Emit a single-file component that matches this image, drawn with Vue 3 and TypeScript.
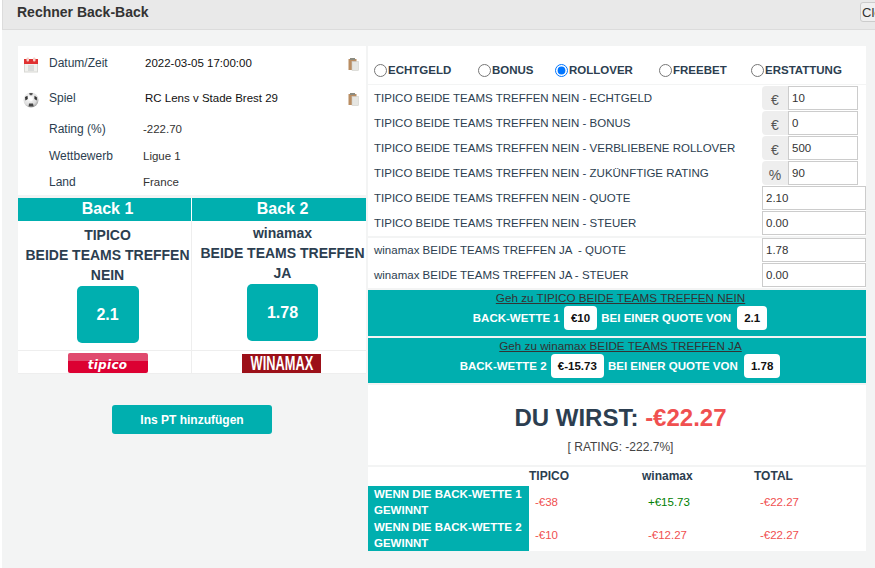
<script setup lang="ts">
interface Field {
  label: string
  value: string
  addon?: string
}

const tipicoFields: Field[] = [
  { label: 'TIPICO BEIDE TEAMS TREFFEN NEIN - ECHTGELD', value: '10', addon: '€' },
  { label: 'TIPICO BEIDE TEAMS TREFFEN NEIN - BONUS', value: '0', addon: '€' },
  { label: 'TIPICO BEIDE TEAMS TREFFEN NEIN - VERBLIEBENE ROLLOVER', value: '500', addon: '€' },
  { label: 'TIPICO BEIDE TEAMS TREFFEN NEIN - ZUKÜNFTIGE RATING', value: '90', addon: '%' },
  { label: 'TIPICO BEIDE TEAMS TREFFEN NEIN - QUOTE', value: '2.10' },
  { label: 'TIPICO BEIDE TEAMS TREFFEN NEIN - STEUER', value: '0.00' }
]

const winamaxFields: Field[] = [
  { label: 'winamax BEIDE TEAMS TREFFEN JA  - QUOTE', value: '1.78' },
  { label: 'winamax BEIDE TEAMS TREFFEN JA - STEUER', value: '0.00' }
]

const modes = [
  { name: 'ECHTGELD', width: 104 },
  { name: 'BONUS', width: 77 },
  { name: 'ROLLOVER', width: 104 },
  { name: 'FREEBET', width: 92 },
  { name: 'ERSTATTUNG', width: 100 }
]

const results = [
  { label: 'WENN DIE BACK-WETTE 1 GEWINNT', a: '-€38', b: '+€15.73', total: '-€22.27' },
  { label: 'WENN DIE BACK-WETTE 2 GEWINNT', a: '-€10', b: '-€12.27', total: '-€22.27' }
]
</script>

<template>
  <div class="page">
    <header class="topbar">
      <h1>Rechner Back-Back</h1>
      <button class="close" type="button">Close</button>
    </header>

    <main class="columns">
      <section class="left">
        <div class="info">
          <div class="info-row tall">
            <svg class="icon" viewBox="0 0 16 16" width="16" height="16">
              <rect x="1.5" y="3" width="13" height="12" fill="#f1f1ee" stroke="#d8d8d4" />
              <rect x="1" y="2" width="14" height="5" fill="#e03131" />
              <rect x="3.5" y="0.5" width="2.5" height="4" rx="1" fill="#f4d0c8" />
              <rect x="10" y="0.5" width="2.5" height="4" rx="1" fill="#f4d0c8" />
              <path d="M5 9h6M5 11h6M5 13h6" stroke="#c4c8c8" />
            </svg>
            <span class="key">Datum/Zeit</span>
            <span class="val">2022-03-05 17:00:00</span>
            <svg class="clip" viewBox="0 0 11 13" width="11" height="13">
              <rect x="0.5" y="1" width="8" height="11" fill="#b98d62" />
              <rect x="2" y="0" width="5" height="2" fill="#8b8b80" />
              <rect x="4" y="3.5" width="6.5" height="9" fill="#e6e6e2" stroke="#cfcfca" stroke-width="0.6" />
            </svg>
          </div>
          <div class="info-row tall">
            <svg class="icon ball" viewBox="0 0 16 16" width="16" height="16">
              <defs>
                <radialGradient id="ballShade" cx="0.4" cy="0.35" r="0.75">
                  <stop offset="0" stop-color="#fff" />
                  <stop offset="0.65" stop-color="#dcdcdc" />
                  <stop offset="1" stop-color="#8c8c8c" />
                </radialGradient>
              </defs>
              <circle cx="8" cy="8" r="7.5" fill="url(#ballShade)" />
              <path d="M6.6 5.2 9.4 5.2 10 8 8 9.6 6 8Z" fill="#fff" />
              <path d="M2 5 4.5 3.8 4.8 7 2.4 8.6Z" fill="#333" />
              <path d="M11.5 3.8 14 5.4 13.8 8.4 11.4 7Z" fill="#333" />
              <path d="M6.2 1 9.8 1 9.2 3.2 6.8 3.2Z" fill="#555" />
              <path d="M6 11.4 10 11.4 10.6 14.6 5.6 14.6Z" fill="#444" />
            </svg>
            <span class="key">Spiel</span>
            <span class="val">RC Lens v Stade Brest 29</span>
            <svg class="clip" viewBox="0 0 11 13" width="11" height="13">
              <rect x="0.5" y="1" width="8" height="11" fill="#b98d62" />
              <rect x="2" y="0" width="5" height="2" fill="#8b8b80" />
              <rect x="4" y="3.5" width="6.5" height="9" fill="#e6e6e2" stroke="#cfcfca" stroke-width="0.6" />
            </svg>
          </div>
          <div class="info-row plain">
            <span class="key">Rating (%)</span>
            <span class="val muted">-222.70</span>
          </div>
          <div class="info-row plain">
            <span class="key">Wettbewerb</span>
            <span class="val muted">Ligue 1</span>
          </div>
          <div class="info-row plain">
            <span class="key">Land</span>
            <span class="val muted">France</span>
          </div>
        </div>

        <div class="backs">
          <div class="back-head">Back 1</div>
          <div class="back-head second">Back 2</div>
          <div class="back-body">
            <p>TIPICO<br />BEIDE TEAMS TREFFEN<br />NEIN</p>
            <div class="odds narrow">2.1</div>
          </div>
          <div class="back-body second">
            <p>winamax<br />BEIDE TEAMS TREFFEN<br />JA</p>
            <div class="odds">1.78</div>
          </div>
          <div class="logo-cell"><div class="logo-tipico"><span>tipico</span></div></div>
          <div class="logo-cell second"><div class="logo-winamax"><span>WINAMAX</span></div></div>
        </div>

        <button class="add" type="button">Ins PT hinzufügen</button>
      </section>

      <section class="right">
        <div class="modes">
          <label v-for="m in modes" :key="m.name" :style="{ width: m.width + 'px' }">
            <input type="radio" name="mode" :checked="m.name === 'ROLLOVER'" />{{ m.name }}
          </label>
        </div>

        <div class="fields first">
          <div v-for="f in tipicoFields" :key="f.label" class="field">
            <span class="field-label">{{ f.label }}</span>
            <span v-if="f.addon" class="addon">{{ f.addon }}</span>
            <input class="num" :class="{ short: f.addon }" :value="f.value" />
          </div>
        </div>

        <div class="fields">
          <div v-for="f in winamaxFields" :key="f.label" class="field">
            <span class="field-label">{{ f.label }}</span>
            <input class="num" :value="f.value" />
          </div>
        </div>

        <div class="action">
          <a>Geh zu TIPICO BEIDE TEAMS TREFFEN NEIN</a>
          <div class="action-line">
            BACK-WETTE 1 <b class="pill">€10</b> BEI EINER QUOTE VON <b class="pill odd">2.1</b>
          </div>
        </div>
        <div class="action low">
          <a>Geh zu winamax BEIDE TEAMS TREFFEN JA</a>
          <div class="action-line">
            BACK-WETTE 2 <b class="pill">€-15.73</b> BEI EINER QUOTE VON <b class="pill odd">1.78</b>
          </div>
        </div>

        <div class="summary">
          <h2>DU WIRST: <span>-€22.27</span></h2>
          <p>[ RATING: -222.7%]</p>
        </div>

        <div class="results">
          <div class="res-head">
            <span>TIPICO</span>
            <span>winamax</span>
            <span>TOTAL</span>
          </div>
          <div v-for="r in results" :key="r.label" class="res-row">
            <div class="res-label">{{ r.label }}</div>
            <span class="loss">{{ r.a }}</span>
            <span :class="r.b.startsWith('+') ? 'win' : 'loss'">{{ r.b }}</span>
            <span class="loss">{{ r.total }}</span>
          </div>
        </div>
      </section>
    </main>
  </div>
</template>

<style>
html, body {
  margin: 0;
  height: 100%;
  overflow: hidden;
  background: #fff;
}
</style>

<style scoped>
.page {
  width: 873px;
  height: 568px;
  margin-left: 2px;
  overflow: hidden;
  background: #f3f4f4;
  font-family: "Liberation Sans", Arial, sans-serif;
  font-size: 11.5px;
  color: #2c3e50;
}

.topbar {
  height: 29px;
  display: flex;
  align-items: flex-start;
  background: #e9e9e9;
  border-bottom: 1px solid #dcdcdc;
  border-left: 1px solid #dcdcdc;
}

h1 {
  flex: none;
  margin: 4px 0 0 14px;
  font-size: 14px;
  line-height: 16px;
  width: 843px;
  color: #333;
}

.close {
  flex: none;
  width: 50px;
  height: 20px;
  margin-top: 2px;
  padding: 0 1px;
  text-align: left;
  font: 13px "Liberation Sans", Arial, sans-serif;
  color: #333;
  background: #f0f0f0;
  border: 1px solid #ccc;
  border-radius: 3px;
}

.columns {
  display: flex;
  align-items: flex-start;
  gap: 2px;
  padding: 16px 0 0 16px;
}

.left {
  flex: none;
  width: 348px;
}

.info {
  background: #fff;
  height: 149px;
  padding-top: 1px;
  box-sizing: border-box;
  margin-bottom: 3px;
}

.info-row {
  display: flex;
  align-items: center;
}

.tall {
  height: 35px;
}

.tall .key,
.tall .val {
  margin-bottom: 4px;
}

.plain {
  height: 26.5px;
  padding-left: 31px;
}

.plain:nth-child(3) {
  margin-top: -1px;
}

.icon {
  margin: 0 10px 0 5px;
  flex: none;
}

.key {
  width: 96px;
  flex: none;
  font-size: 12px;
}

.plain .key {
  width: 94px;
}

.tall .val {
  color: #111;
  width: 203px;
  flex: none;
}

.muted {
  color: #333;
}

.clip {
  flex: none;
}

.backs {
  display: grid;
  grid-template-columns: 174px 174px;
  grid-template-rows: 23px 130px 23px;
  background: #fff;
}

.back-head {
  background: #00afaf;
  color: #fff;
  font-weight: bold;
  font-size: 16px;
  line-height: 21px;
  text-align: center;
  padding-left: 6px;
  border-right: 1px solid #fff;
}

.back-head.second {
  padding-left: 7px;
  border-right: 0;
}

.back-body {
  text-align: center;
  padding-left: 6px;
  border-right: 1px solid #eee;
  border-bottom: 1px solid #eee;
  white-space: nowrap;
}

.back-body.second {
  padding-left: 7px;
  border-right: 0;
}

.back-body p {
  margin: 4px 0 1px;
  font-weight: bold;
  font-size: 14px;
  line-height: 20px;
}

.back-body.second p {
  margin-top: 2px;
}

.odds {
  width: 71px;
  height: 57px;
  margin: 0 auto;
  background: #00afaf;
  border-radius: 5px;
  color: #fff;
  font-weight: bold;
  font-size: 16px;
  line-height: 57px;
}

.odds.narrow {
  width: 62px;
}

.logo-cell {
  display: flex;
  justify-content: center;
  padding: 2px 0 0 6px;
  border-right: 1px solid #eee;
  border-bottom: 1px solid #eee;
}

.logo-cell.second {
  padding: 3px 0 0 5px;
  border-right: 0;
}

.logo-tipico {
  width: 80px;
  height: 20px;
  border-radius: 2px;
  background: linear-gradient(#e04a6e 0, #e04a6e 8px, #dc0032 8px);
  color: #fff;
  font: italic bold 12px/24px "DejaVu Sans", sans-serif;
  text-align: center;
  letter-spacing: 0.3px;
  overflow: hidden;
}

.logo-winamax {
  display: flex;
  justify-content: center;
  width: 79px;
  height: 19px;
  background: #9c1019;
  color: #fff;
  font-weight: bold;
  font-size: 20px;
  line-height: 19px;
}

.logo-winamax span {
  flex: none;
  transform: scaleX(0.64);
}

.add {
  display: block;
  width: 160px;
  height: 29px;
  margin: 31px 0 0 94px;
  background: #00afaf;
  border: 0;
  border-radius: 3px;
  color: #fff;
  font: bold 12px "Liberation Sans", Arial, sans-serif;
}

.right {
  flex: none;
  width: 498px;
  display: flex;
  flex-direction: column;
  gap: 2px;
}

.modes {
  height: 38px;
  background: #fff;
  display: flex;
  align-items: flex-end;
  padding: 0 0 7px 6px;
  box-sizing: border-box;
  margin-bottom: -1px;
}

.modes label {
  display: flex;
  align-items: center;
  flex: none;
  font-weight: bold;
  color: #2c3e50;
  line-height: 14px;
}

.modes input {
  margin: 0 1px 0 0;
  width: 13px;
  height: 13px;
  flex: none;
}

.fields {
  background: #fff;
}

.fields.first {
  padding-top: 1px;
}

.field {
  height: 25px;
  display: flex;
  align-items: stretch;
  padding-left: 6px;
}

.field-label {
  flex: 1;
  line-height: 24px;
  min-width: 0;
  white-space: pre;
}

.addon {
  width: 26px;
  height: 24px;
  box-sizing: border-box;
  background: #eee;
  border-radius: 4px 0 0 4px;
  text-align: center;
  font-size: 14px;
  line-height: 29px;
  color: #555;
}

.num {
  width: 104px;
  height: 24px;
  box-sizing: border-box;
  padding: 0 3px;
  margin: 0;
  border: 1px solid #ccc;
  border-radius: 0;
  background: #fff;
  color: #333;
  font: 11.5px "Liberation Sans", Arial, sans-serif;
}

.num.short {
  width: 70px;
  margin-right: 8px;
}

.action {
  background: #00afaf;
  height: 46px;
  padding-left: 7px;
  text-align: center;
  box-sizing: border-box;
}

.action.low {
  height: 45px;
}

.action a {
  display: block;
  font-size: 11.7px;
  line-height: 16px;
  color: #333;
  text-decoration: underline;
}

.action-line {
  color: #fff;
  font-weight: bold;
  line-height: 25px;
}

.pill {
  display: inline-block;
  background: #fff;
  color: #111;
  border-radius: 4px;
  padding: 0 7px;
  line-height: 24px;
  margin: 0 1px;
}

.pill.odd {
  margin-left: 3px;
}

.summary {
  height: 80px;
  padding-left: 7px;
  background: #fff;
  text-align: center;
  overflow: hidden;
}

.summary h2 {
  margin: 19px 0 0;
  font-size: 24px;
  line-height: 28px;
}

.summary h2 span {
  color: #f05050;
}

.summary p {
  margin: 8px 0 0;
  font-size: 12px;
  color: #444;
}

.results {
  background: #fff;
  height: 84px;
}

.res-head {
  height: 19px;
  display: grid;
  grid-template-columns: 113px 112px 100px;
  padding-left: 161px;
  font-size: 12px;
  font-weight: bold;
  line-height: 18px;
}

.res-row {
  display: grid;
  grid-template-columns: 161px 113px 112px 1fr;
  height: 32.5px;
  align-items: center;
}

.res-label {
  height: 100%;
  box-sizing: border-box;
  background: #00afaf;
  color: #fff;
  font-weight: bold;
  line-height: 16px;
  padding: 0 6px;
}

.res-row span {
  padding-left: 6px;
}

.loss {
  color: #f05050;
}

.win {
  color: #008000;
}
</style>
